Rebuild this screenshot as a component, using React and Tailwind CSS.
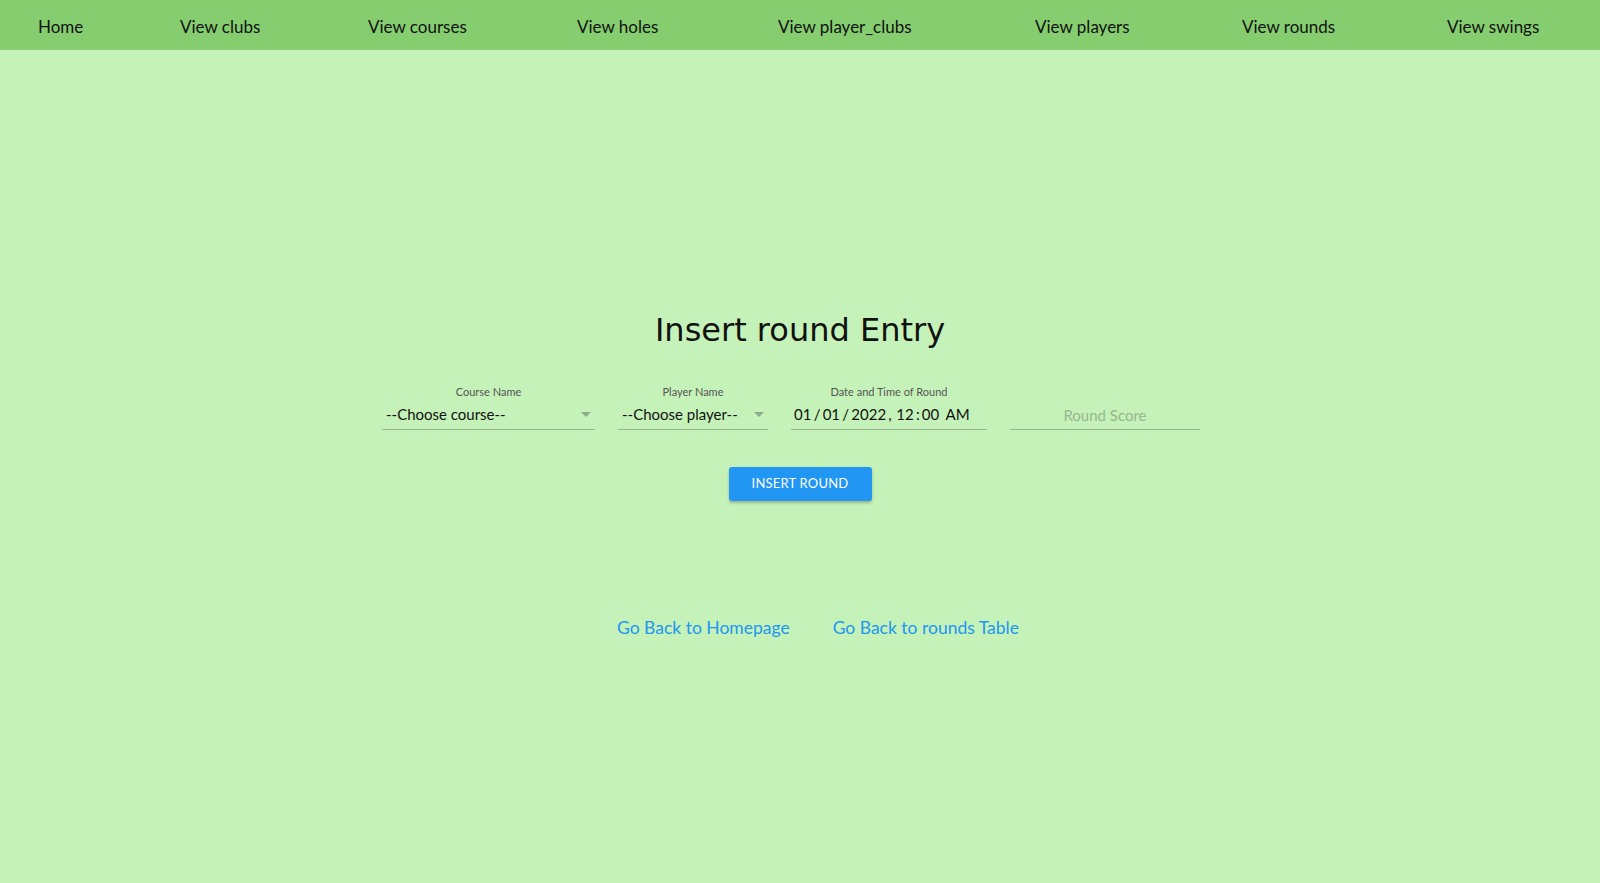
export default function App() {
  const nav = [
    ["Home", "w-[142px]"],
    ["View clubs", "w-[188px]"],
    ["View courses", "w-[209px]"],
    ["View holes", "w-[201px]"],
    ["View player_clubs", "w-[257px]"],
    ["View players", "w-[207px]"],
    ["View rounds", "w-[205px]"],
    ["View swings", "w-[120px]"],
  ];
  const font = { fontFamily: "Lato, 'Open Sans', sans-serif" };
  const Caret = () => (
    <svg width="10" height="6" viewBox="0 0 10 6" className="shrink-0">
      <path d="M0 0 L10 0 L5 5 Z" fill="#8faa88" />
    </svg>
  );
  return (
    <div className="min-h-[883px] w-full bg-[#c5f2b8] text-[#111]" style={font}>
      <nav className="h-[50px] bg-[#86cd70] flex items-center pt-[4px] pl-[38px] text-[17px] text-[#111]">
        {nav.map(([n, w]) => (
          <div key={n} className={w}>
            <a className="cursor-pointer">{n}</a>
          </div>
        ))}
      </nav>
      <main className="flex flex-col items-center pt-[261px]">
        <h1 className="text-[32px] leading-[38px] text-[#111]" style={{ fontFamily: "'DejaVu Sans', Verdana, sans-serif" }}>
          Insert round Entry
        </h1>
        <div className="flex items-end gap-[23px] mt-[36px] ml-[-18px]">
          <div className="flex flex-col items-center w-[213px]">
            <span className="text-[11px] leading-[14px] text-[#555]">Course Name</span>
            <div className="w-full h-[31px] flex items-center justify-between px-[4px] pt-[1px] border-b border-[#97b48f] text-[15px]">
              <span>--Choose course--</span>
              <Caret />
            </div>
          </div>
          <div className="flex flex-col items-center w-[150px]">
            <span className="text-[11px] leading-[14px] text-[#555]">Player Name</span>
            <div className="w-full h-[31px] flex items-center justify-between px-[4px] pt-[1px] border-b border-[#97b48f] text-[15px]">
              <span>--Choose player--</span>
              <Caret />
            </div>
          </div>
          <div className="flex flex-col items-center w-[196px]">
            <span className="text-[11px] leading-[14px] text-[#555]">Date and Time of Round</span>
            <div className="w-full h-[31px] flex items-center px-[3px] pt-[1px] border-b border-[#97b48f] text-[15px] whitespace-pre [word-spacing:-1.6px]">
              <span>01 / 01 / 2022 ,  12 : 00   AM</span>
            </div>
          </div>
          <div className="flex flex-col items-center w-[190px]">
            <div className="w-full h-[31px] flex items-center justify-center pt-[3px] border-b border-[#97b48f] text-[15px] text-[#98b592]">
              Round Score
            </div>
          </div>
        </div>
        <button className="mt-[37px] w-[143px] h-[34px] rounded-[3px] bg-[#2196f3] text-white text-[13px] tracking-[0.2px] shadow-[0_2px_3px_rgba(0,0,0,0.25)]">
          INSERT ROUND
        </button>
        <div className="flex gap-[43px] mt-[115px] ml-[36px] text-[17.5px] leading-[24px] text-[#2196f3]">
          <a className="cursor-pointer">Go Back to Homepage</a>
          <a className="cursor-pointer">Go Back to rounds Table</a>
        </div>
      </main>
    </div>
  );
}
